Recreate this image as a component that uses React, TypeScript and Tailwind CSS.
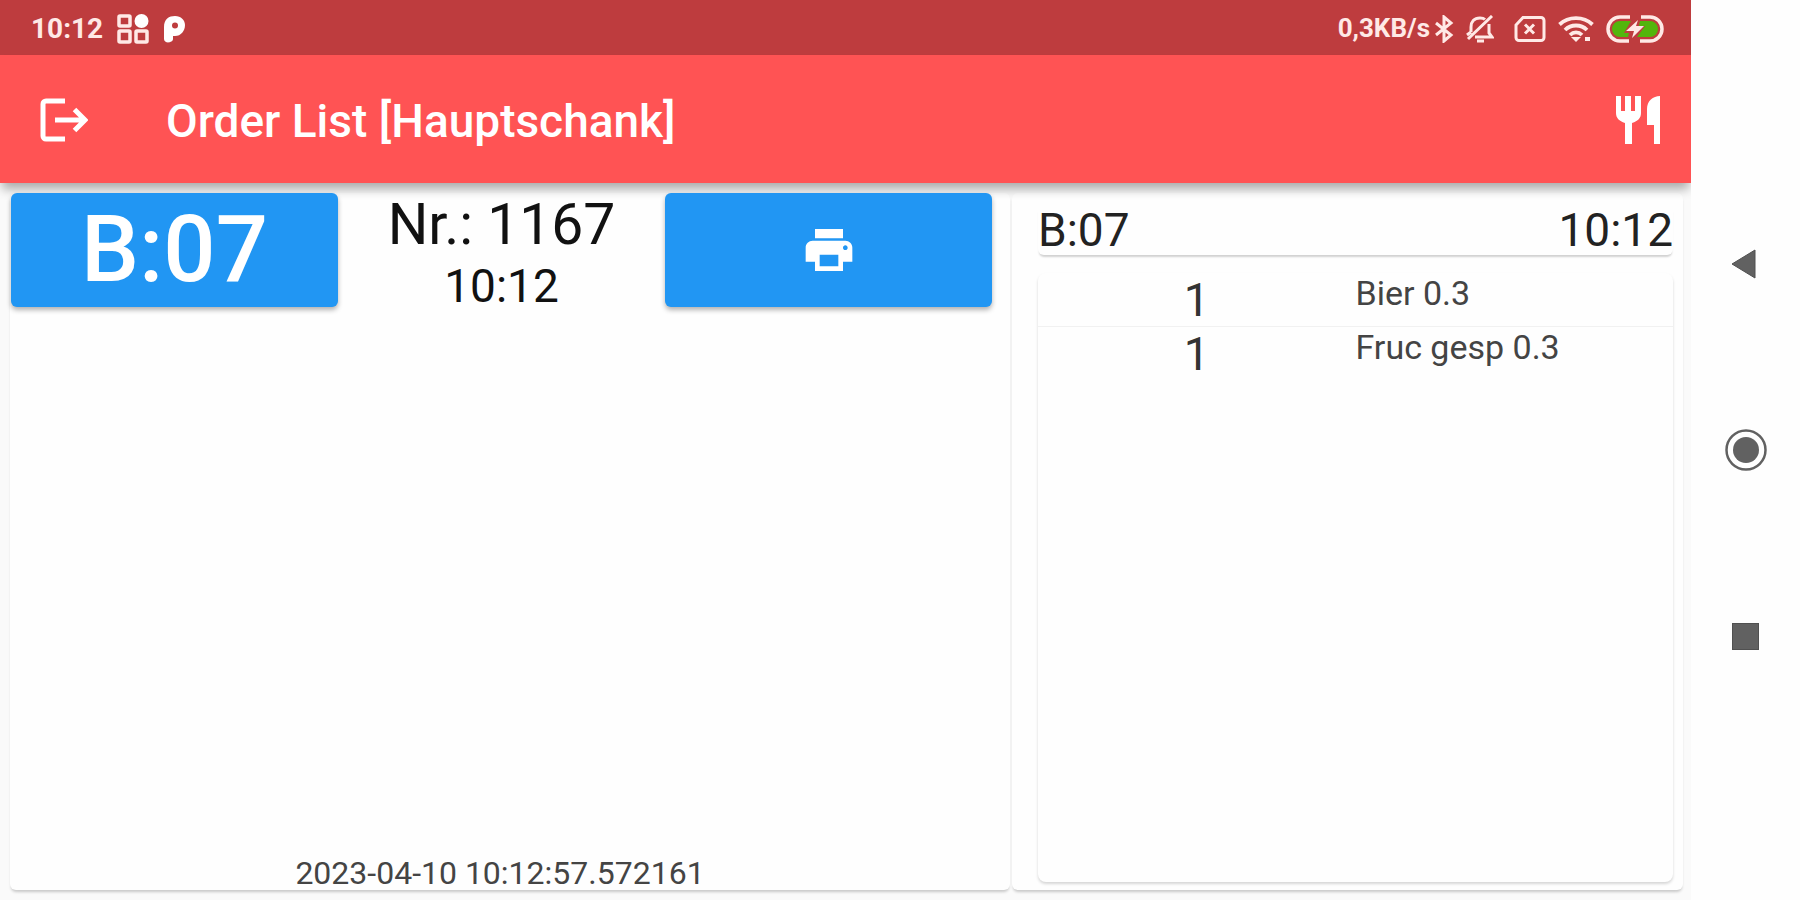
import type { ReactNode } from 'react';
import { MdPrint } from 'react-icons/md';

const order = {
  table: 'B:07',
  number: 1167,
  time: '10:12',
  created: '2023-04-10 10:12:57.572161',
  items: [
    { amount: 1, name: 'Bier 0.3' },
    { amount: 1, name: 'Fruc gesp 0.3' },
  ],
};

const AppsIcon = () => (
  <svg viewBox="0 0 32 30" className="h-[30px] w-8" fill="none" stroke="currentColor" strokeWidth="3.500">
    <rect x="2" y="2" width="11" height="10" rx="1" />
    <rect x="2" y="17" width="11" height="11" rx="1" />
    <rect x="19" y="17" width="11" height="11" rx="1" />
    <circle cx="24.500" cy="7" r="7" fill="#fff" stroke="none" />
  </svg>
);

const ParkingIcon = () => (
  <svg viewBox="0 0 22 28" className="h-7 w-[22px]">
    <path
      fill="#fff"
      fillRule="evenodd"
      d="M1 12C1 4 6 1 12 1c6 0 10 4 10 9 0 6-4 11-10 11h-2v3c0 4-9 5-9 0zM12 7.500a3 3 0 1 0 0 6 3 3 0 0 0 0-6z"
    />
  </svg>
);

const BluetoothIcon = () => (
  <svg viewBox="0 0 20 28" className="h-7 w-5" fill="none" stroke="currentColor" strokeWidth="3">
    <path d="M2 8l15 12-7 6V2l7 6L2 20" />
  </svg>
);

const MutedIcon = () => (
  <svg viewBox="0 0 28 28" className="h-7 w-7" fill="none" stroke="currentColor" strokeWidth="3">
    <path d="M5 17V12C5 7 8 3 14 3c2 0 4 .5 5 1.500M23 9v9l3 4H9M11 26h7M26 1L2 24M1 20l4-3" />
  </svg>
);

const NoSimIcon = () => (
  <svg viewBox="0 0 32 28" className="h-7 w-8" fill="none" stroke="currentColor" strokeWidth="3">
    <path d="M9 2.500h18a3 3 0 0 1 3 3v17a3 3 0 0 1-3 3H5a3 3 0 0 1-3-3V10z" />
    <path d="M11 9.500l9 9M20 9.500l-9 9" />
  </svg>
);

const WifiIcon = () => (
  <svg viewBox="0 0 36 28" className="h-7 w-9" fill="none" stroke="currentColor" strokeWidth="3.800">
    <path d="M1.500 9.500c9-8.500 24-8.500 33 0M7 15c6-6 16-6 22 0M12 20c3.500-3.500 8.500-3.500 12 0" />
    <path d="M13 22h10l-5 5z" fill="currentColor" stroke="none" />
    <path d="M27 24h5" strokeWidth="4" />
  </svg>
);

const BatteryIcon = () => (
  <svg viewBox="0 0 58 28" className="h-7 w-[58px]">
    <path
      d="M24 2H14a12 12 0 0 0 0 24h9M35 2h9a12 12 0 0 1 0 24H34"
      fill="none"
      stroke="currentColor"
      strokeWidth="3.500"
    />
    <path d="M25 6H14a8 8 0 0 0 0 16h8l1-4h-5zM34 6h10a8 8 0 0 1 0 16H31l8-11h-6z" fill="#53b50c" />
    <path d="M32 5L20 16h8l-2 7 12-12h-8z" fill="currentColor" />
  </svg>
);

const LogoutIcon = () => (
  <svg viewBox="0 0 48 44" className="h-11 w-12" fill="none" stroke="currentColor" strokeWidth="5">
    <path d="M25 3H6a3 3 0 0 0-3 3v32a3 3 0 0 0 3 3h19" />
    <path d="M15 22h30M34.500 11.500L45 22 34.500 32.500" />
  </svg>
);

const CutleryIcon = () => (
  <svg viewBox="0 0 46 48" className="h-12 w-[46px]" fill="currentColor">
    <path d="M0 0h5v15h4V0h6v15h4V0h6v17c0 5-3 8-9 10v21H9V27c-6-2-9-5-9-10z" />
    <path d="M44 0v48h-6V29h-7V13C31 5 37 0 44 0z" />
  </svg>
);

const BlueButton = ({ label, children }: { label: string; children: ReactNode }) => (
  <button
    type="button"
    aria-label={label}
    className="flex h-[114px] items-center justify-center rounded-md bg-[#2196f3] text-[92px] leading-none font-medium text-white shadow-[0_3px_5px_rgba(0,0,0,0.3)]"
  >
    {children}
  </button>
);

const StatusBar = () => (
  <div className="flex h-[55px] items-center justify-between bg-[#be3c3e] pt-[2px] pr-[27px] pl-[31px] text-[#ffe9e6]">
    <div className="flex items-center gap-[14px]">
      <span className="text-[28px] font-bold">{order.time}</span>
      <AppsIcon />
      <ParkingIcon />
    </div>
    <div className="flex items-center">
      <span className="mr-1 text-[26px] font-bold">0,3KB/s</span>
      <BluetoothIcon />
      <span className="mr-5 ml-3">
        <MutedIcon />
      </span>
      <NoSimIcon />
      <span className="mr-3 ml-3">
        <WifiIcon />
      </span>
      <BatteryIcon />
    </div>
  </div>
);

const AppBar = () => (
  <header className="relative flex h-32 items-center bg-[#ff5354] pt-[2px] pr-[29px] pl-10 text-white shadow-[0_8px_10px_-2px_rgba(0,0,0,0.32)]">
    <button type="button" aria-label="Log out">
      <LogoutIcon />
    </button>
    <h1 className="ml-[78px] flex-1 pt-[2px] text-[46px] font-medium">Order List [Hauptschank]</h1>
    <button type="button" aria-label="Menu">
      <CutleryIcon />
    </button>
  </header>
);

const OrderCard = () => (
  <section className="flex flex-col rounded-md bg-[#fefefe] shadow-[0_3px_3px_-1px_rgba(0,0,0,0.2)]">
    <div className="relative grid grid-cols-3 pr-[18px] pl-px">
      <BlueButton label={`Table ${order.table}`}>{order.table}</BlueButton>
      <div className="flex flex-col items-center text-[#111]">
        <p className="text-[57px] leading-[64px]">Nr.: {order.number}</p>
        <p className="text-[46px] leading-[58px]">{order.time}</p>
      </div>
      <BlueButton label="Print order">
        <MdPrint className="size-14" />
      </BlueButton>
    </div>
    <p className="mt-auto pr-5 text-center text-[32px] leading-[34px] text-[#444]">{order.created}</p>
  </section>
);

const DetailCard = () => (
  <section className="flex flex-col rounded-md bg-[#fefefe] pt-3 pr-[10px] pb-2 pl-[26px] shadow-[0_3px_3px_-1px_rgba(0,0,0,0.2)]">
    <div className="flex h-[50px] items-center justify-between rounded-md text-[46px] text-[#222] shadow-[0_3px_2px_-1px_rgba(0,0,0,0.18)]">
      <span>{order.table}</span>
      <span>{order.time}</span>
    </div>
    <div className="mt-[18px] flex-1 rounded-lg shadow-[0_2px_3px_rgba(0,0,0,0.16)]">
      <table className="w-full table-fixed text-[#444]">
        <tbody>
          {order.items.map((item) => (
            <tr key={item.name} className="h-[53px] border-b border-[#f1f1f1] last:border-0">
              <td className="w-1/2 pt-[2px] text-center text-[46px] leading-[48px] text-[#333]">{item.amount}</td>
              <td className="align-top text-[34px] leading-10">{item.name}</td>
            </tr>
          ))}
        </tbody>
      </table>
    </div>
  </section>
);

const SystemNav = () => (
  <nav aria-label="System" className="relative flex w-[109px] flex-col items-center bg-[#fefefe] text-[#616161]">
    <button type="button" aria-label="Back" className="mt-[242px] flex h-11 items-center">
      <svg viewBox="0 0 30 30" className="size-[30px]" fill="currentColor" stroke="#505050">
        <path d="M1 15L24 1v28z" />
      </svg>
    </button>
    <button type="button" aria-label="Home" className="mt-[142px] flex h-11 items-center">
      <svg viewBox="0 0 44 44" className="size-11">
        <circle cx="22" cy="22" r="19.500" fill="none" stroke="currentColor" strokeWidth="2.500" />
        <circle cx="22" cy="22" r="13" fill="currentColor" />
      </svg>
    </button>
    <button type="button" aria-label="Recent apps" className="mt-[142px] flex h-11 items-center">
      <span className="size-[27px] border border-[#505050] bg-[#616161]" />
    </button>
  </nav>
);

const App = () => (
  <div className="flex min-h-screen bg-[#fafafa] font-['Roboto',sans-serif]">
    <div className="flex flex-1 flex-col">
      <StatusBar />
      <AppBar />
      <main className="grid flex-1 grid-cols-[1000fr_671fr] gap-[2px] pt-[10px] pr-2 pb-[10px] pl-[10px]">
        <OrderCard />
        <DetailCard />
      </main>
    </div>
    <SystemNav />
  </div>
);

export default App;
